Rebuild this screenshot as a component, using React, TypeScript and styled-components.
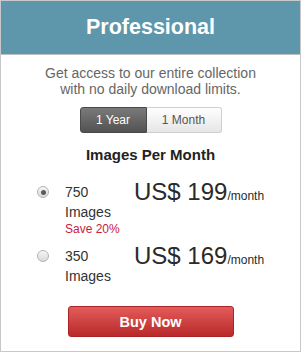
import React, { useState } from "react";
import styled, { createGlobalStyle } from "styled-components";

const Global = createGlobalStyle`
  html, body { margin: 0; padding: 0; background: #fff; }
  body { font-family: "Liberation Sans", Arial, sans-serif; }
  * { box-sizing: border-box; }
`;

const Card = styled.div`
  width: 301px;
  height: 352px;
  border: 1px solid #c8c8c8;
  background: #fff;
  display: flex;
  flex-direction: column;
  align-items: center;
`;

const Header = styled.div`
  align-self: stretch;
  height: 54px;
  background: #5e97ab;
  border-bottom: 1px solid #c0c0c0;
  display: flex;
  align-items: center;
  justify-content: center;
  color: #fff;
  font-weight: bold;
  font-size: 21.5px;
`;

const Desc = styled.p`
  margin: 10px 0 0;
  font-size: 14px;
  line-height: 16px;
  color: #666;
  text-align: center;
`;

const Toggle = styled.div`
  margin-top: 10px;
  display: flex;
  height: 26px;
  width: 142px;
`;

const ToggleBtn = styled.button<{ $active?: boolean; $side: "l" | "r" }>`
  height: 26px;
  width: ${(p) => (p.$side === "l" ? 67 : 75)}px;
  font-family: inherit;
  font-size: 12px;
  padding: 0;
  cursor: pointer;
  border: 1px solid ${(p) => (p.$active ? "#4a4a4a" : "#cfcfcf")};
  border-radius: ${(p) => (p.$side === "l" ? "3px 0 0 3px" : "0 3px 3px 0")};
  color: ${(p) => (p.$active ? "#fff" : "#555")};
  background: ${(p) =>
    p.$active
      ? "linear-gradient(#7a7a7a, #525252)"
      : "linear-gradient(#fefefe, #e6e6e6)"};
  ${(p) => (p.$active ? "" : "border-left: none;")}
`;

const SubTitle = styled.h3`
  margin: 13px 0 0;
  font-size: 15px;
  line-height: 18px;
  font-weight: bold;
  color: #222;
`;

const Options = styled.div`
  align-self: stretch;
  margin-top: 18px;
  display: flex;
  flex-direction: column;
  gap: 10px;
`;

const Row = styled.label`
  display: grid;
  grid-template-columns: 36px 12px 16px 69px auto;
  align-items: start;
  cursor: pointer;
`;

const Radio = styled.input`
  grid-column: 2;
  appearance: none;
  margin: 4px 0 0;
  width: 12px;
  height: 12px;
  border-radius: 50%;
  border: 1px solid #b4b4b4;
  background: linear-gradient(#f6f6f6, #d9d9d9);
  position: relative;
  &:checked::after {
    content: "";
    position: absolute;
    left: 2.5px;
    top: 2.5px;
    width: 5px;
    height: 5px;
    border-radius: 50%;
    background: #5a5a5a;
  }
`;

const Qty = styled.div`
  grid-column: 4;
  font-size: 14px;
  line-height: 20px;
  color: #333;
`;

const Save = styled.div`
  font-size: 12px;
  line-height: 14px;
  color: #c7223a;
`;

const Price = styled.div`
  grid-column: 5;
  margin-top: -2px;
  font-size: 24px;
  line-height: 24px;
  color: #2a2a2a;
  white-space: nowrap;
`;

const Per = styled.span`
  font-size: 12px;
`;

const BuyButton = styled.button`
  margin-top: 20px;
  width: 166px;
  height: 31px;
  border: 1px solid #a82426;
  border-radius: 3px;
  background: linear-gradient(#e35c5a, #b9292b);
  color: #fff;
  font-family: inherit;
  font-weight: bold;
  font-size: 14.5px;
  cursor: pointer;
`;

const plans = [
  { qty: "750", price: "199", save: "Save 20%" },
  { qty: "350", price: "169" },
];

export default function App() {
  const [period, setPeriod] = useState("year");
  const [plan, setPlan] = useState("750");
  return (
    <>
      <Global />
      <Card>
        <Header>Professional</Header>
        <Desc>
          Get access to our entire collection
          <br />
          with no daily download limits.
        </Desc>
        <Toggle>
          <ToggleBtn $side="l" $active={period === "year"} onClick={() => setPeriod("year")}>
            1 Year
          </ToggleBtn>
          <ToggleBtn $side="r" $active={period === "month"} onClick={() => setPeriod("month")}>
            1 Month
          </ToggleBtn>
        </Toggle>
        <SubTitle>Images Per Month</SubTitle>
        <Options>
          {plans.map((p) => (
            <Row key={p.qty}>
              <Radio
                type="radio"
                name="plan"
                checked={plan === p.qty}
                onChange={() => setPlan(p.qty)}
              />
              <Qty>
                {p.qty}
                <br />
                Images
                {p.save && <Save>{p.save}</Save>}
              </Qty>
              <Price>
                US$ {p.price}
                <Per>/month</Per>
              </Price>
            </Row>
          ))}
        </Options>
        <BuyButton>Buy Now</BuyButton>
      </Card>
    </>
  );
}
